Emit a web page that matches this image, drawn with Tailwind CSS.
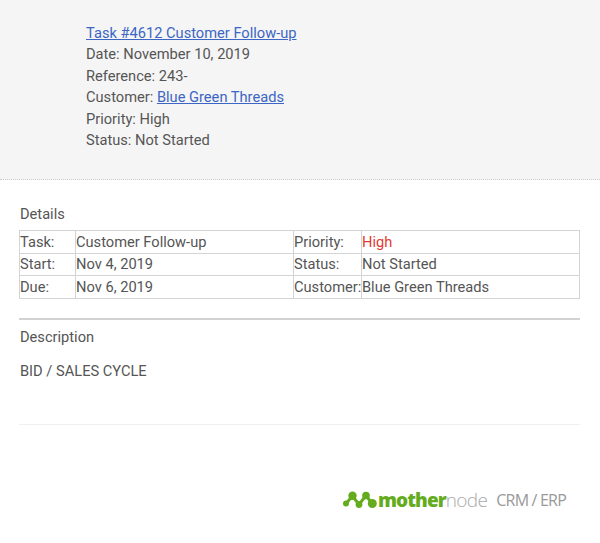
<!DOCTYPE html>
<html lang="en">
<head>
<meta charset="UTF-8">
<title>Task</title>
<script src="https://cdn.jsdelivr.net/npm/@tailwindcss/browser@4"></script>
</head>
<body class="bg-white font-['Roboto',sans-serif] text-[14.65px] text-[#555] w-[600px] h-[543px] overflow-hidden">
  <!-- header -->
  <div class="bg-[#f5f5f5] h-[180px] pt-[22.5px] pl-[86px] border-b border-dotted border-[#ccc] leading-[21.5px]">
    <div><a href="#" class="text-[#3b66c4] underline">Task #4612 Customer Follow-up</a></div>
    <div>Date: November 10, 2019</div>
    <div>Reference: 243-</div>
    <div>Customer: <a href="#" class="text-[#3b66c4] underline">Blue Green Threads</a></div>
    <div>Priority: High</div>
    <div>Status: Not Started</div>
  </div>

  <div class="pl-[19px] pr-[20px]">
    <div class="mt-[24px] pl-px leading-[20px]">Details</div>
    <table class="mt-[6px] w-full border-collapse table-fixed leading-[20px]">
      <tr class="h-[22.5px]">
        <td class="w-[56px] border border-[#d4d4d4]">Task:</td>
        <td class="w-[218px] border border-[#d4d4d4]">Customer Follow-up</td>
        <td class="w-[68px] border border-[#d4d4d4]">Priority:</td>
        <td class="border border-[#d4d4d4] text-[#e53935]">High</td>
      </tr>
      <tr class="h-[22.5px]">
        <td class="border border-[#d4d4d4]">Start:</td>
        <td class="border border-[#d4d4d4]">Nov 4, 2019</td>
        <td class="border border-[#d4d4d4]">Status:</td>
        <td class="border border-[#d4d4d4]">Not Started</td>
      </tr>
      <tr class="h-[22.5px]">
        <td class="border border-[#d4d4d4]">Due:</td>
        <td class="border border-[#d4d4d4]">Nov 6, 2019</td>
        <td class="border border-[#d4d4d4]">Customer:</td>
        <td class="border border-[#d4d4d4]">Blue Green Threads</td>
      </tr>
    </table>
    <div class="mt-[19px] border-t-2 border-[#d2d2d2] pt-[7px] pl-px leading-[20px]">Description</div>
    <div class="mt-[14px] pl-px leading-[20px]">BID / SALES CYCLE</div>
    <div class="mt-[43px] border-t border-[#f0f0f0]"></div>
  </div>

  <!-- logo -->
  <div class="mt-[66px] pr-[34px] flex justify-end items-center">
    <svg width="34" height="18" viewBox="0 0 34 18" class="mr-[1px]">
      <path d="M3 12.5 L9.5 5 L16 13.5 L23 4.5 L29 12.5" fill="none" stroke="#64ac1e" stroke-width="3"/>
      <circle cx="3" cy="12.5" r="3" fill="#64ac1e"/>
      <circle cx="9.5" cy="4.8" r="4.2" fill="#64ac1e"/>
      <circle cx="16" cy="13.5" r="3.4" fill="#64ac1e"/>
      <circle cx="23" cy="4.5" r="3.8" fill="#64ac1e"/>
      <circle cx="29.3" cy="12.5" r="4.5" fill="#64ac1e"/>
    </svg>
    <span class="font-['Open_Sans',sans-serif] text-[19px] tracking-[-0.9px] font-extrabold text-[#64ac1e] leading-none">mother</span><span class="font-['Open_Sans',sans-serif] text-[19px] tracking-[-0.65px] font-light text-[#aaa] leading-none">node</span>
    <span class="ml-[9px] font-['Open_Sans',sans-serif] text-[16px] tracking-[-0.8px] text-[#999] leading-none">CRM / ERP</span>
  </div>
</body>
</html>
